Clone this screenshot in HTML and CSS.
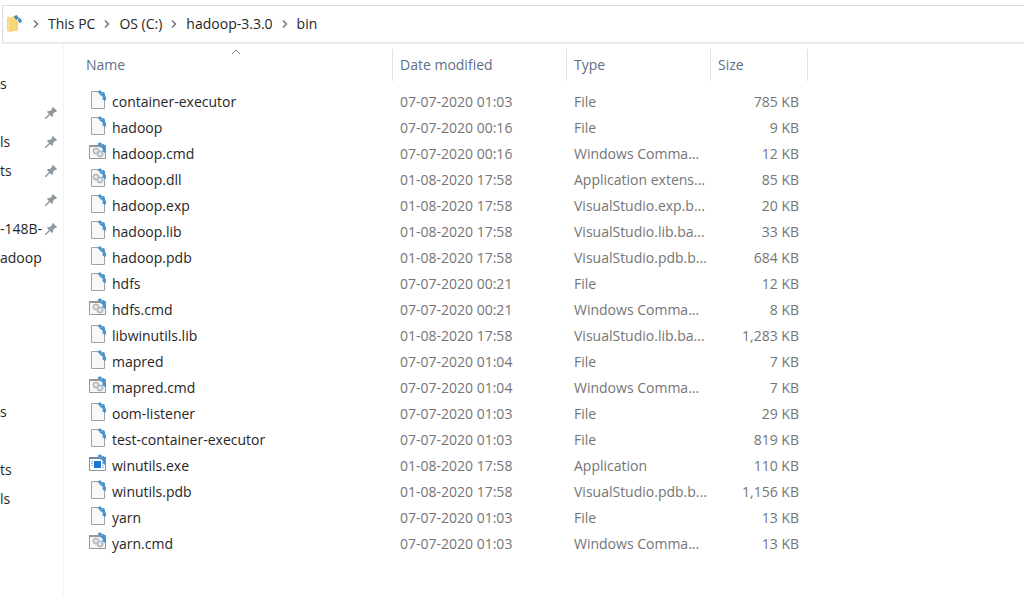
FILE: index.html
```html
<!DOCTYPE html>
<html lang="en">
<head>
    <meta charset="UTF-8">
    <title>bin</title>
    <link rel="stylesheet" href="styles.css">
</head>
<body>

    <svg class="sprite" aria-hidden="true">
        <!-- blue arrows in the corner of every compressed file -->
        <symbol id="arrows" viewBox="0 0 20 20">
            <path d="M9 2 L11 1 L12 0 L14 2 L16 2 L17 4 L17 6 L18 7 L18 10 L17 11 L14 9 L15 8 L14 6 L12 5 L11 3 Z" fill="#4a93cb"/>
            <path d="M13 4 L15 2" stroke="#8fbfe2" stroke-width="1"/>
        </symbol>
        <symbol id="file" viewBox="0 0 20 20">
            <path d="M3.5 1.5 H12 L16.5 6 V18.5 H3.5 Z" fill="#f8f8f8" stroke="#a3a3a3"/>
            <use href="#arrows" width="20" height="20"/>
        </symbol>
        <symbol id="gears" viewBox="0 0 20 20">
            <circle cx="8" cy="9" r="2.5" fill="#e9edf1" stroke="#b3bac1" stroke-width="1.5"/>
            <circle cx="12" cy="12" r="2.5" fill="#e9edf1" stroke="#b3bac1" stroke-width="1.5"/>
            <circle cx="8" cy="9" r="3.4" fill="none" stroke="#c3c9cf" stroke-dasharray="1 1.5"/>
            <circle cx="12" cy="12" r="3.4" fill="none" stroke="#c3c9cf" stroke-dasharray="1 1.5"/>
        </symbol>
        <symbol id="cmd" viewBox="0 0 20 20">
            <path d="M1.5 3.5 H17.5 V16.5 H1.5 Z" fill="#f6f7f8" stroke="#989898"/>
            <path d="M1 4 H18" stroke="#989898" stroke-width="2"/>
            <use href="#gears" width="20" height="20"/>
            <use href="#arrows" width="20" height="20"/>
        </symbol>
        <symbol id="dll" viewBox="0 0 20 20">
            <path d="M3.5 1.5 H12 L16.5 6 V18.5 H3.5 Z" fill="#f6f7f8" stroke="#a3a3a3"/>
            <use href="#gears" width="20" height="20"/>
            <use href="#arrows" width="20" height="20"/>
        </symbol>
        <symbol id="exe" viewBox="0 0 20 20">
            <path d="M1.5 3.5 H17.5 V16.5 H1.5 Z" fill="#fff" stroke="#8a959f"/>
            <path d="M1 4 H18" stroke="#6d8aa3" stroke-width="2"/>
            <path d="M3 7.5 H5 M3 9.5 H5 M3 11.5 H5 M14 11.5 H16 M14 13.5 H16" stroke="#8fb3d3"/>
            <rect x="6" y="7" width="7" height="7" fill="#1c78d4"/>
            <use href="#arrows" width="20" height="20"/>
        </symbol>
        <symbol id="pin" viewBox="0 0 12 12">
            <path d="M8 0 L12 4 L11 5 L10 5 L8 7 L8 9 L7 10 L5 8 L1 12 L0 12 L0 11 L4 7 L2 5 L3 4 L5 4 L7 2 L7 1 Z" fill="#8f999f"/>
        </symbol>
        <symbol id="next" viewBox="0 0 8 8">
            <path d="M2 0.5 L5.5 4 L2 7.5" fill="none" stroke="#757575" stroke-width="1.5"/>
        </symbol>
    </svg>

    <nav class="address-bar">
        <svg class="folder" viewBox="0 0 18 18">
            <path d="M1 2 L6 2 L6 1 L11 1 L11 14 L12 16 L1 16 Z" fill="#fbdc83"/>
            <path d="M3 4 L12 6 L12 15 L4 17 L1 16 L1 3 Z" fill="#f6d477"/>
            <path d="M3 4 L3 16" stroke="#fbe6a6"/>
            <path d="M8 1 L11 0 L12 2 L15 4 L16 7 L13 8 L12 5 L9 4 Z" fill="#3f8ac0"/>
            <path d="M11 5 L13 3" stroke="#b9d6ea"/>
        </svg>
        <svg class="next"><use href="#next"/></svg>
        <a href="#">This PC</a>
        <svg class="next"><use href="#next"/></svg>
        <a href="#">OS (C:)</a>
        <svg class="next"><use href="#next"/></svg>
        <a href="#">hadoop-3.3.0</a>
        <svg class="next"><use href="#next"/></svg>
        <a href="#">bin</a>
    </nav>

    <div class="main">
        <aside class="sidebar">
            <ul>
                <li>s</li>
                <li><svg class="pin"><use href="#pin"/></svg></li>
                <li>ls<svg class="pin"><use href="#pin"/></svg></li>
                <li>ts<svg class="pin"><use href="#pin"/></svg></li>
                <li><svg class="pin"><use href="#pin"/></svg></li>
                <li>-148B-<svg class="pin"><use href="#pin"/></svg></li>
                <li>adoop</li>
            </ul>
            <ul>
                <li>s</li>
                <li></li>
                <li>ts</li>
                <li>ls</li>
            </ul>
        </aside>

        <table class="files">
            <colgroup>
                <col class="col-name">
                <col class="col-date">
                <col class="col-type">
                <col class="col-size">
            </colgroup>
            <thead>
                <tr>
                    <th>
                        <svg class="sort" viewBox="0 0 10 6"><path d="M1 5 L5 1 L9 5" fill="none" stroke="#808080"/></svg>
                        <button>Name</button>
                    </th>
                    <th><button>Date modified</button></th>
                    <th><button>Type</button></th>
                    <th><button>Size</button></th>
                </tr>
            </thead>
            <tbody>
                <tr><td><svg class="icon"><use href="#file"/></svg>container-executor</td><td>07-07-2020 01:03</td><td>File</td><td>785 KB</td></tr>
                <tr><td><svg class="icon"><use href="#file"/></svg>hadoop</td><td>07-07-2020 00:16</td><td>File</td><td>9 KB</td></tr>
                <tr><td><svg class="icon"><use href="#cmd"/></svg>hadoop.cmd</td><td>07-07-2020 00:16</td><td>Windows Comma...</td><td>12 KB</td></tr>
                <tr><td><svg class="icon"><use href="#dll"/></svg>hadoop.dll</td><td>01-08-2020 17:58</td><td>Application extens...</td><td>85 KB</td></tr>
                <tr><td><svg class="icon"><use href="#file"/></svg>hadoop.exp</td><td>01-08-2020 17:58</td><td>VisualStudio.exp.b...</td><td>20 KB</td></tr>
                <tr><td><svg class="icon"><use href="#file"/></svg>hadoop.lib</td><td>01-08-2020 17:58</td><td>VisualStudio.lib.ba...</td><td>33 KB</td></tr>
                <tr><td><svg class="icon"><use href="#file"/></svg>hadoop.pdb</td><td>01-08-2020 17:58</td><td>VisualStudio.pdb.b...</td><td>684 KB</td></tr>
                <tr><td><svg class="icon"><use href="#file"/></svg>hdfs</td><td>07-07-2020 00:21</td><td>File</td><td>12 KB</td></tr>
                <tr><td><svg class="icon"><use href="#cmd"/></svg>hdfs.cmd</td><td>07-07-2020 00:21</td><td>Windows Comma...</td><td>8 KB</td></tr>
                <tr><td><svg class="icon"><use href="#file"/></svg>libwinutils.lib</td><td>01-08-2020 17:58</td><td>VisualStudio.lib.ba...</td><td>1,283 KB</td></tr>
                <tr><td><svg class="icon"><use href="#file"/></svg>mapred</td><td>07-07-2020 01:04</td><td>File</td><td>7 KB</td></tr>
                <tr><td><svg class="icon"><use href="#cmd"/></svg>mapred.cmd</td><td>07-07-2020 01:04</td><td>Windows Comma...</td><td>7 KB</td></tr>
                <tr><td><svg class="icon"><use href="#file"/></svg>oom-listener</td><td>07-07-2020 01:03</td><td>File</td><td>29 KB</td></tr>
                <tr><td><svg class="icon"><use href="#file"/></svg>test-container-executor</td><td>07-07-2020 01:03</td><td>File</td><td>819 KB</td></tr>
                <tr><td><svg class="icon"><use href="#exe"/></svg>winutils.exe</td><td>01-08-2020 17:58</td><td>Application</td><td>110 KB</td></tr>
                <tr><td><svg class="icon"><use href="#file"/></svg>winutils.pdb</td><td>01-08-2020 17:58</td><td>VisualStudio.pdb.b...</td><td>1,156 KB</td></tr>
                <tr><td><svg class="icon"><use href="#file"/></svg>yarn</td><td>07-07-2020 01:03</td><td>File</td><td>13 KB</td></tr>
                <tr><td><svg class="icon"><use href="#cmd"/></svg>yarn.cmd</td><td>07-07-2020 01:03</td><td>Windows Comma...</td><td>13 KB</td></tr>
            </tbody>
        </table>
    </div>

</body>
</html>
```

FILE: styles.css
```css
* {
    box-sizing: border-box;
}
body {
    margin: 0;
    min-height: 100vh;
    display: flex;
    flex-direction: column;
    background: #fff;
    color: #262626;
    font-family: "Open Sans", "Noto Sans", sans-serif;
    font-size: 14px;
    line-height: 20px;
}
.sprite {
    display: none;
}
.address-bar {
    display: flex;
    align-items: center;
    margin: 5px 0 0 2px;
    padding: 8px 3px;
    border: 1px solid #dcdcdc;
    border-right: none;
    border-bottom: 2px solid #ebebeb;
}
.address-bar a {
    color: inherit;
    text-decoration: none;
}
.folder {
    width: 18px;
    height: 18px;
}
.next {
    width: 8px;
    height: 8px;
    margin: 0 8px;
}
.main {
    display: flex;
    flex: 1;
    gap: 15px;
}
.sidebar {
    width: 64px;
    padding: 25px 6px 0 0;
    border-right: 1px solid #f3f3f3;
}
.sidebar ul {
    list-style: none;
    margin: 0;
    padding: 0;
}
.sidebar ul + ul {
    margin-top: 125px;
}
.sidebar li {
    display: flex;
    align-items: center;
    height: 29px;
    white-space: nowrap;
}
.pin {
    flex: none;
    width: 12px;
    height: 12px;
    margin-left: auto;
}
.files {
    align-self: flex-start;
    margin-top: 5px;
    table-layout: fixed;
    border-spacing: 0;
}
.col-name {
    width: 314px;
}
.col-date {
    width: 174px;
}
.col-type {
    width: 144px;
}
.col-size {
    width: 97px;
}
.files th {
    position: relative;
    height: 32px;
    padding: 0 0 0 7px;
    border-right: 1px solid #e2e2e2;
    text-align: left;
}
.files th button {
    padding: 0;
    border: none;
    background: none;
    color: #5d6f87;
    font: inherit;
    font-weight: normal;
}
.sort {
    position: absolute;
    top: 0;
    left: 0;
    right: 0;
    margin: 0 auto;
    width: 10px;
    height: 6px;
}
.files tbody::before {
    content: '';
    display: block;
    height: 8px;
}
.files td {
    height: 26px;
    padding: 0 0 0 7px;
    color: #757575;
    white-space: nowrap;
}
.files td:first-child {
    padding-left: 9px;
    color: #262626;
}
.files td:last-child {
    padding-right: 9px;
    text-align: right;
}
.icon {
    width: 20px;
    height: 20px;
    margin: -2px 4px 0 0;
    vertical-align: top;
}
```
